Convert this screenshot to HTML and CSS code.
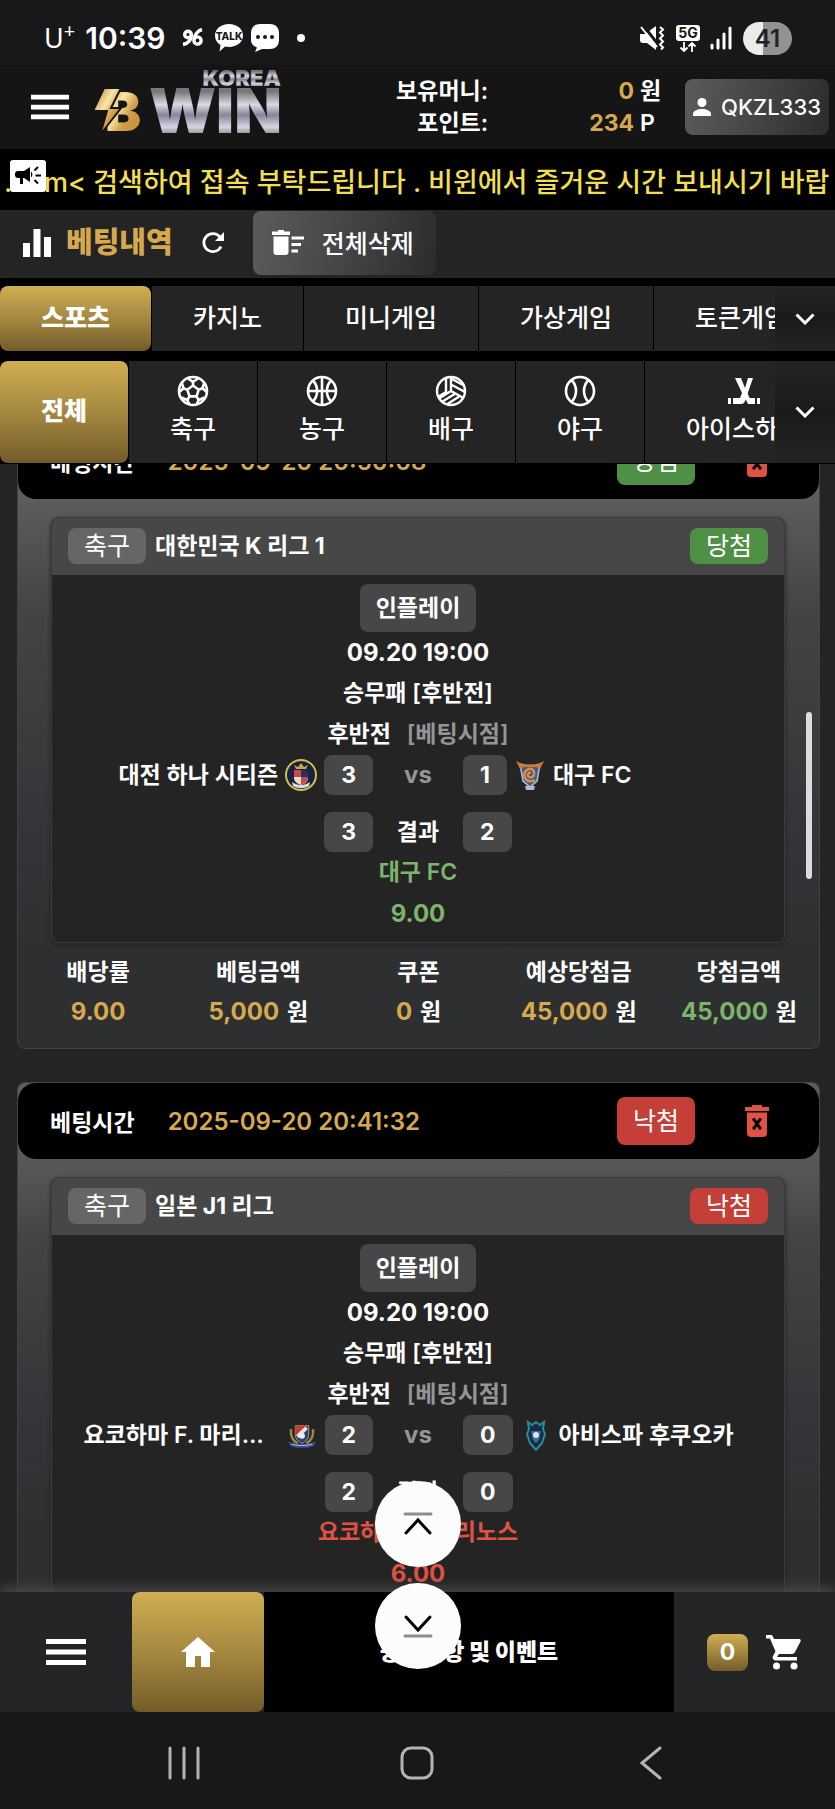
FILE: index.html
```html
<!DOCTYPE html>
<html lang="ko">
<head>
    <meta charset="UTF-8">
    <meta name="viewport" content="width=device-width, initial-scale=1.0">
    <title>베팅내역</title>
    <link rel="stylesheet" href="styles.css">
</head>
<body>
    <svg class="defs" width="0" height="0" aria-hidden="true">
        <symbol id="ic-menu" viewBox="0 0 40 26"><path d="M0 0h40v5H0zM0 10.500h40v5H0zM0 21h40v5H0z"/></symbol>
        <symbol id="ic-down" viewBox="0 0 20 12"><path d="M1.500 1.500 10 10l8.500-8.500" fill="none" stroke="currentColor" stroke-width="3"/></symbol>
        <symbol id="ic-trash-x" viewBox="0 0 24 32"><path d="M7 0h10v2h7v4H0V2h7z"/><path fill-rule="evenodd" d="M2 7.500h20V28a4 4 0 0 1-4 4H6a4 4 0 0 1-4-4zM7 14.600l3.400 4.200L7 23l2.200 2.200 2.800-3.600 2.800 3.600L17 23l-3.400-4.200L17 14.600l-2.200-2.200L12 16l-2.800-3.600z"/></symbol>
    </svg>

    <!-- 상태바 -->
    <div class="status-bar">
        <span class="carrier">U<sup>+</sup></span>
        <span class="clock">10:39</span>
        <svg class="st-96" width="22" height="20" viewBox="0 0 22 20" fill="none" stroke="#fff" stroke-width="3.400"><circle cx="6" cy="6.500" r="3.300"/><path d="M9.500 6C9.500 12 6 15.500 1 16.500"/><circle cx="15.500" cy="12.500" r="3.600"/><path d="M20 1.500c-4 1-7.500 5-8 10"/></svg>
        <svg class="st-talk" width="30" height="28" viewBox="0 0 30 28"><path fill="#fff" d="M15 0c8 0 14 5 14 11.500S23 23 15 23c-1.500 0-3-.2-4-.5L5.500 27.500 6.500 21C3 19 1 15.500 1 11.500 1 5 7 0 15 0z"/><text x="15" y="16" text-anchor="middle" class="talk-text">TALK</text></svg>
        <svg class="st-chat" width="28" height="28" viewBox="0 0 28 28"><path fill="#fff" d="M9 0h10c6 0 9 4 9 9v7c0 6-4 9-9 9h-8l-7 3 2-4.500C2 22 0 19.500 0 16V9c0-5 3-9 9-9z"/><g fill="#18181a"><circle cx="7" cy="13" r="2"/><circle cx="14" cy="13" r="2"/><circle cx="21" cy="13" r="2"/></g></svg>
        <span class="dot"></span>
        <span class="spacer"></span>
        <svg width="24" height="24" viewBox="0 0 24 24"><path fill="#fff" d="M0 8h5l11-8v24L7 17H3c-2 0-3-1-3-3z"/><path d="M3-1l17 22" stroke="#18181a" stroke-width="3"/><path d="M1 1l16 20" stroke="#fff" stroke-width="2"/><path d="M20 1l3 2.500-3 3 3 3-3 3 3 3-3 3 3 3-2 2" fill="none" stroke="#fff" stroke-width="2"/></svg>
        <svg class="st-5g" width="24" height="27" viewBox="0 0 24 27"><rect width="24" height="16" rx="3" fill="#fff"/><text x="12" y="13" text-anchor="middle" class="fiveg-text">5G</text><path d="M8 17v9M4.500 22.500 8 26l3.500-3.500M16 27v-9M12.500 21.500 16 18l3.500 3.500" fill="none" stroke="#fff" stroke-width="1.800"/></svg>
        <svg class="st-signal" width="22" height="24" viewBox="0 0 22 24" stroke="#fff" stroke-width="3" stroke-linecap="round"><path d="M2 19v3M8 14v8M14 8v14M20 2v20"/></svg>
        <span class="battery">41</span>
    </div>

    <!-- 헤더 -->
    <header class="header">
        <button class="icon-button" aria-label="메뉴"><svg width="38" height="26"><use href="#ic-menu"/></svg></button>
        <a class="logo" href="#" aria-label="KOREA WIN">
            <svg width="190" height="76" viewBox="0 0 190 76">
                <defs>
                    <linearGradient id="silver" x1="0" y1="0" x2="0" y2="1">
                        <stop offset=".25" stop-color="#77777c"/><stop offset=".42" stop-color="#d9d9e2"/>
                        <stop offset=".56" stop-color="#86869a"/><stop offset=".72" stop-color="#d5d5e2"/><stop offset=".85" stop-color="#77777c"/>
                    </linearGradient>
                    <linearGradient id="gold" x1="0" y1="0" x2="1" y2="1">
                        <stop offset="0" stop-color="#a8741f"/><stop offset=".4" stop-color="#fbe6a8"/>
                        <stop offset=".6" stop-color="#d0a04a"/><stop offset="1" stop-color="#c1862c"/>
                    </linearGradient>
                </defs>
                <text x="12" y="62" class="logo-b" fill="url(#gold)">B</text>
                <path d="M11 19h17L18 39h10L7 66l7-24H0z" fill="url(#gold)" stroke="#151515" stroke-width="2"/>
                <text x="56" y="64" class="logo-win" fill="url(#silver)">WIN</text>
                <text x="188" y="17" text-anchor="end" class="logo-korea" fill="url(#silver)">KOREA</text>
            </svg>
        </a>
        <dl class="balance">
            <dt>보유머니:</dt><dd class="gold">0</dd><dd>원</dd>
            <dt>포인트:</dt><dd class="gold">234</dd><dd>P</dd>
        </dl>
        <button class="gray-button user-button">
            <svg width="18" height="18" viewBox="0 0 18 18" fill="#fff"><circle cx="9" cy="4.500" r="4.500"/><path d="M0 18v-2c0-3.500 5-5 9-5s9 1.500 9 5v2z"/></svg>
            QKZL333
        </button>
    </header>

    <div class="notice">
        <span class="notice-icon">
            <svg width="26" height="20" viewBox="0 0 26 20"><path d="M3 5h6l6-4v15l-6-4H8v6H5v-6H3a3 3 0 0 1-3-3.500A3 3 0 0 1 3 5z"/><path d="M16 5.500a4 4 0 0 1 0 6z"/><path d="M19.500 4.500 23 1M20.500 9.500H26M19.500 14l3.500 3.500" stroke="#000" stroke-width="2"/></svg>
        </span>
        <p class="notice-text">.com&lt; 검색하여 접속 부탁드립니다 . 비윈에서 즐거운 시간 보내시기 바랍</p>
    </div>

    <div class="title-bar">
        <svg width="28" height="28" viewBox="0 0 28 28" fill="#fff"><path d="M0 14h7v14H0zM10.500 0h7v28h-7zM21 8h7v20h-7z"/></svg>
        <h1>베팅내역</h1>
        <button class="icon-button" aria-label="새로고침">
            <svg width="24" height="24" viewBox="0 0 24 24"><path d="M20 15.500A9 9 0 1 1 18.500 5.500L21 8" fill="none" stroke="#fff" stroke-width="2.800"/><path d="M23 1v9h-9z" fill="#fff"/></svg>
        </button>
        <button class="gray-button delete-all">
            <svg width="32" height="25" viewBox="0 0 32 25" fill="#fff"><path d="M6 0h6v1.500h6V5H0V1.500h6zM1.500 6.500h15V22a3 3 0 0 1-3 3h-9a3 3 0 0 1-3-3zM19.500 6.500H32v3H19.500zM19.500 13H29v3h-9.500zM19.500 19.500H26v3h-6.500z"/></svg>
            전체삭제
        </button>
    </div>

    <nav class="tabs">
        <div class="tab-strip">
            <button class="tab active">스포츠</button>
            <button class="tab">카지노</button>
            <button class="tab">미니게임</button>
            <button class="tab">가상게임</button>
            <button class="tab">토큰게임</button>
        </div>
        <button class="expand" aria-label="펼치기"><svg width="20" height="12"><use href="#ic-down"/></svg></button>
    </nav>

    <nav class="tabs sport-tabs">
        <div class="tab-strip">
            <button class="tab active">전체</button>
            <button class="tab">
                <svg width="32" height="32" viewBox="0 0 32 32" fill="none" stroke="#fff" stroke-width="2.600"><circle cx="16" cy="16" r="14"/><path d="M16 10.500l5.700 4.200-2.200 6.700h-7l-2.200-6.700zM16 10.500V7l-5-3.500M16 7l5-3.500M21.700 14.700l3.800-1.400 1.800-6M25.500 13.300l4.500 4M19.500 21.400l2.200 3.600-2 4.500M21.700 25l6-2.500M12.500 21.400 10.300 25l2 4.500M10.300 25l-6-2.500M10.300 14.700l-3.800-1.400-1.800-6M6.500 13.300l-4.500 4"/></svg>
                축구
            </button>
            <button class="tab">
                <svg width="32" height="32" viewBox="0 0 32 32" fill="none" stroke="#fff" stroke-width="2.600"><circle cx="16" cy="16" r="14"/><path d="M16 2v28M2 16h28M7 5.500c5.500 6 5.500 15 0 21M25 5.500c-5.500 6-5.500 15 0 21"/></svg>
                농구
            </button>
            <button class="tab">
                <svg width="32" height="32" viewBox="0 0 32 32" fill="none" stroke="#fff" stroke-width="2.400"><circle cx="16" cy="16" r="14"/><path d="M16 2v14l12.500 7M16 16 4 23.500M11 3v14L3 22M16 9.500l14 7.500M16 3.500 28 10M20.500 18.500 7.500 26.500M25 21 12.500 29"/></svg>
                배구
            </button>
            <button class="tab">
                <svg width="32" height="32" viewBox="0 0 32 32" fill="none" stroke="#fff" stroke-width="2.600"><circle cx="16" cy="16" r="14"/><path d="M7.500 5c6 6 6 16 0 22M24.500 5c-6 6-6 16 0 22"/></svg>
                야구
            </button>
            <button class="tab">
                <svg width="32" height="32" viewBox="0 0 32 32" fill="#fff"><path d="M7 3h6l4 10 3-10h5l-8 23c-.5 2-2 3-4 3H5v-6h7l2-5zM19.500 18l2 5H27v6h-7l-2.500-5zM0 23h3v6H0zM29 23h3v6h-3z"/></svg>
                아이스하키
            </button>
        </div>
        <button class="expand" aria-label="펼치기"><svg width="20" height="12"><use href="#ic-down"/></svg></button>
    </nav>

    <!-- 베팅 목록 -->
    <main class="bet-view">
        <div class="bet-list">
            <article class="bet">
                <div class="bet-head">
                    <span class="bet-label">베팅시간</span>
                    <time class="gold">2025-09-20 20:50:08</time>
                    <span class="badge tall win">당첨</span>
                    <button class="trash" aria-label="삭제"><svg width="24" height="32"><use href="#ic-trash-x"/></svg></button>
                </div>
                <div class="match">
                    <div class="match-head">
                        <span class="badge">축구</span>
                        <h2>대한민국 K 리그 1</h2>
                        <span class="badge win">당첨</span>
                    </div>
                    <div class="match-body">
                        <span class="inplay">인플레이</span>
                        <p class="num">09.20 19:00</p>
                        <p>승무패 [후반전]</p>
                        <p class="point">후반전 <span class="muted">[베팅시점]</span></p>
                        <div class="versus">
                            <div class="home">
                                <span class="team">대전 하나 시티즌</span>
                                <svg width="32" height="32" viewBox="0 0 32 32"><circle cx="16" cy="16" r="15" fill="#1b2047" stroke="#d3c04a" stroke-width="2"/><path d="M9 11h14v8c0 4-4 6-7 7-3-1-7-3-7-7z" fill="#e9dcc0"/><path d="M9 11h7v7H9zM16 18h7c0 4-3 6-7 8z" fill="#c9494d"/><path d="M16 11h7v7h-7z" fill="#27305f"/><path d="M11 10 9 6l4 2 3-4 3 4 4-2-2 4z" fill="#c9a93f"/><path d="M7 23c6 4 12 4 18 0l-1 4c-5 3-11 3-16 0z" fill="#d9d9dc"/></svg>
                                <span class="score">3</span>
                            </div>
                            <span class="muted num">vs</span>
                            <div class="away">
                                <span class="score">1</span>
                                <svg width="32" height="32" viewBox="-2 0 32 32"><path d="M4 5c6 2 14 2 20 0l-3 17-7 6-7-6z" fill="#2f5f9e" stroke="#a9c3dd" stroke-width="1.500"/><path d="M0 2l8 4c4-1 8-1 12 0l8-4-4 8-4-2H8l-4 2z" fill="#d8752c"/><path d="M15 14c-2-1-4 1-3 3s5 2 6-1-1-7-5-6-6 5-4 9 7 4 10 2" fill="none" stroke="#ec8a35" stroke-width="2.500"/><path d="M9 27h10l-1 4h-8z" fill="#b9bcc2"/></svg>
                                <span class="team">대구 FC</span>
                            </div>
                        </div>
                        <div class="versus result">
                            <div class="home"><span class="score">3</span></div>
                            <span>결과</span>
                            <div class="away"><span class="score">2</span></div>
                        </div>
                        <p class="green">대구 FC</p>
                        <p class="green num">9.00</p>
                    </div>
                </div>
                <table class="totals">
                    <thead>
                        <tr><th>배당률</th><th>베팅금액</th><th>쿠폰</th><th>예상당첨금</th><th>당첨금액</th></tr>
                    </thead>
                    <tbody>
                        <tr>
                            <td><span class="gold num">9.00</span></td>
                            <td><span class="gold num">5,000</span> <span class="unit">원</span></td>
                            <td><span class="gold num">0</span> <span class="unit">원</span></td>
                            <td><span class="gold num">45,000</span> <span class="unit">원</span></td>
                            <td><span class="green num">45,000</span> <span class="unit">원</span></td>
                        </tr>
                    </tbody>
                </table>
            </article>

            <article class="bet">
                <div class="bet-head">
                    <span class="bet-label">베팅시간</span>
                    <time class="gold">2025-09-20 20:41:32</time>
                    <span class="badge tall lose">낙첨</span>
                    <button class="trash" aria-label="삭제"><svg width="24" height="32"><use href="#ic-trash-x"/></svg></button>
                </div>
                <div class="match">
                    <div class="match-head">
                        <span class="badge">축구</span>
                        <h2>일본 J1 리그</h2>
                        <span class="badge lose">낙첨</span>
                    </div>
                    <div class="match-body">
                        <span class="inplay">인플레이</span>
                        <p class="num">09.20 19:00</p>
                        <p>승무패 [후반전]</p>
                        <p class="point">후반전 <span class="muted">[베팅시점]</span></p>
                        <div class="versus">
                            <div class="home">
                                <span class="team">요코하마 F. 마리노스</span>
                                <svg width="32" height="32" viewBox="-3 -3 38 38"><path d="M3 9c-1 8 2 14 8 17M29 9c1 8-2 14-8 17" fill="none" stroke="#9b8a3c" stroke-width="3"/><path d="M8 5h16v10c0 6-4 9-8 11-4-2-8-5-8-11z" fill="#28407f" stroke="#c9b25e"/><path d="M8 5h16L8 16z" fill="#c23b34"/><path d="M20 6 9 16l3 4 11-11z" fill="#e6e6e6"/><circle cx="16" cy="17" r="3.500" fill="#eee"/><path d="M0 24c10 4 22 4 32 0l-2 5c-9 3-19 3-28 0z" fill="#3c50a5"/><path d="M4 27c8 2 16 2 24 0" fill="none" stroke="#c8cde0"/></svg>
                                <span class="score">2</span>
                            </div>
                            <span class="muted num">vs</span>
                            <div class="away">
                                <span class="score">0</span>
                                <svg width="32" height="32" viewBox="0 0 32 32"><path d="M8 3l4 3 4-3 4 3 4-3-1 7 2 5-3 9-6 7-6-7-3-9 2-5z" fill="#182b45" stroke="#2a8d9a" stroke-width="2"/><path d="M11 12h10l-2 9-3 3-3-3z" fill="#3a6ea4"/><circle cx="16" cy="16" r="3" fill="#d5e6f2"/></svg>
                                <span class="team">아비스파 후쿠오카</span>
                            </div>
                        </div>
                        <div class="versus result">
                            <div class="home"><span class="score">2</span></div>
                            <span>결과</span>
                            <div class="away"><span class="score">0</span></div>
                        </div>
                        <p class="red">요코하마 F. 마리노스</p>
                        <p class="red num">6.00</p>
                    </div>
                </div>
            </article>
        </div>
        <span class="scroll-thumb"></span>
    </main>

    <nav class="bottom-nav">
        <button class="nav-side" aria-label="메뉴"><svg width="40" height="26"><use href="#ic-menu"/></svg></button>
        <a class="nav-home" href="#" aria-label="홈"><svg width="34" height="30" viewBox="0 0 34 30" fill="#fff"><path d="M17 0l17 15h-5v15h-9V19h-6v11H5V15H0z"/></svg></a>
        <a class="nav-notice" href="#">공지사항 및 이벤트</a>
        <button class="nav-cart" aria-label="카트">
            <span class="cart-count">0</span>
            <svg width="36" height="36" viewBox="0 0 36 36" fill="#fff"><path d="M0 1h6l2 4h25c2 0 2 1.500 1.500 2.500L29 18c-1 1.500-2 2-3 2H13l-2 3h20v3.500H10c-3 0-4-2.500-3-4.500l2.500-4.500L4 4.500H0z"/><circle cx="10.500" cy="32" r="3.500"/><circle cx="28" cy="32" r="3.500"/></svg>
        </button>
        <div class="jump">
            <button aria-label="맨 위로"><svg width="30" height="24" viewBox="0 0 30 24" fill="none" stroke-linecap="round" stroke-width="3"><path d="M2 2h26" stroke="#8c8c8c"/><path d="M3 21 15 8l12 13" stroke="#000"/></svg></button>
            <button aria-label="맨 아래로"><svg width="30" height="24" viewBox="0 0 30 24" fill="none" stroke-linecap="round" stroke-width="3"><path d="M3 3l12 13L27 3" stroke="#000"/><path d="M2 22h26" stroke="#8c8c8c"/></svg></button>
        </div>
    </nav>

    <div class="system-nav">
        <button aria-label="최근 앱"><svg width="32" height="34" viewBox="0 0 32 34"><path d="M2 2v30M16 2v30M30 2v30"/></svg></button>
        <button aria-label="홈 화면"><svg width="34" height="34" viewBox="0 0 34 34"><rect x="2" y="2" width="30" height="30" rx="9"/></svg></button>
        <button aria-label="뒤로"><svg width="22" height="34" viewBox="0 0 22 34"><path d="M20 2 2 17l18 15"/></svg></button>
    </div>
</body>
</html>
```
FILE: styles.css
```css
* {
    box-sizing: border-box;
    margin: 0;
    padding: 0;
}
body {
    display: flex;
    flex-direction: column;
    height: 100vh;
    overflow: hidden;
    background: #000;
    color: #fff;
    font-family: Inter, "Noto Sans CJK KR", sans-serif;
    font-size: 23px;
    font-weight: 600;
}
button {
    border: none;
    background: none;
    color: inherit;
    font: inherit;
    cursor: pointer;
}
a {
    color: inherit;
    text-decoration: none;
}
svg {
    flex: none;
    display: block;
    overflow: visible;
}
svg:not([fill]) {
    fill: currentColor;
}
.defs {
    position: absolute;
}
.gold { color: #d6a94f; }
.green { color: #7db46c; }
.red { color: #e05243; }
.muted { color: #959595; }
.num {
    font-size: 24px;
    font-weight: 700;
}
.spacer { flex: 1; }

/* status bar */
.status-bar {
    flex: none;
    display: flex;
    align-items: center;
    height: 65px;
    padding: 11px 43px 0 44px;
    background: #18181a;
}
.carrier {
    margin-right: 10px;
    font-family: "Noto Sans", sans-serif;
    font-size: 27px;
    font-weight: 400;
    line-height: 32px;
}
.carrier sup {
    font-size: 20px;
    line-height: 0;
}
.clock {
    font-size: 30px;
}
.st-96 { margin-left: 16px; }
.st-talk { margin-left: 10px; }
.st-chat { margin-left: 7px; }
.st-5g { margin-left: 12px; }
.st-signal { margin-left: 10px; }
.talk-text {
    font-size: 10px;
    font-weight: 800;
    fill: #18181a;
}
.fiveg-text {
    font-size: 14px;
    font-weight: 700;
    fill: #18181a;
}
.dot {
    width: 8px;
    height: 8px;
    margin-left: 18px;
    border-radius: 50%;
    background: #fff;
}
.battery {
    width: 49px;
    margin-left: 11px;
    border-radius: 17px;
    background: linear-gradient(90deg, #ececec 40%, #929292 40%);
    color: #222;
    font-size: 24px;
    line-height: 33px;
    text-align: center;
}

/* header */
.header {
    flex: none;
    display: flex;
    align-items: center;
    height: 84px;
    padding: 0 6px 0 31px;
    background: #151515;
}
.logo {
    margin-left: 24px;
}
.logo-b {
    font-size: 54px;
    font-weight: 900;
}
.logo-win {
    font-size: 62px;
    font-weight: 900;
}
.logo-korea {
    font-size: 22px;
    font-weight: 900;
}
.balance {
    display: grid;
    grid-template-columns: 1fr 146px 51px;
    flex: 1;
    line-height: 32px;
    text-align: right;
}
.balance .gold {
    font-weight: 700;
}
.balance dd:nth-of-type(even) {
    padding-left: 6px;
    text-align: left;
}
.gray-button {
    display: flex;
    align-items: center;
    border-radius: 8px;
    background: linear-gradient(100deg, #5b5b5b, #454545 50%, #2b2c2e);
}
.user-button {
    gap: 10px;
    height: 56px;
    padding: 0 8px;
    font-size: 22px;
    font-weight: 500;
}

/* notice */
.notice {
    flex: none;
    position: relative;
    height: 61px;
    padding: 14px 4px 0;
    overflow: hidden;
    background: #000;
}
.notice-icon {
    position: absolute;
    left: 10px;
    top: 11px;
    display: grid;
    place-items: center;
    width: 36px;
    height: 32px;
    border-radius: 3px;
    background: #fff;
    color: #000;
}
.notice-text {
    color: #f2df4e;
    font-size: 27px;
    font-weight: 500;
    line-height: 40px;
    white-space: nowrap;
}

/* title bar */
.title-bar {
    flex: none;
    display: flex;
    align-items: center;
    height: 68px;
    padding: 0 23px 2px;
    background: #242424;
}
.title-bar h1 {
    margin: 0 28px 0 15px;
    color: #d6a94f;
    font-size: 29px;
    font-weight: 900;
    line-height: 40px;
}
.delete-all {
    gap: 18px;
    height: 64px;
    margin-left: 28px;
    padding: 0 22px 2px 19px;
    font-size: 25px;
    font-weight: 500;
}

/* tabs */
.tabs {
    flex: none;
    display: flex;
    height: 65px;
    margin-top: 8px;
    background: #242424;
}
.tab-strip {
    flex: 1;
    display: flex;
    gap: 1px;
    min-width: 0;
    overflow: hidden;
    background: #000;
}
.tab {
    flex: none;
    display: flex;
    flex-direction: column;
    align-items: center;
    justify-content: center;
    padding: 0 41px 2px;
    background: #242424;
    font-size: 25px;
    font-weight: 500;
    line-height: 36px;
    white-space: nowrap;
}
.tab.active {
    border-radius: 8px;
    background: linear-gradient(#d0ae53, #a58840 50%, #745c29);
    font-weight: 900;
}
.expand {
    display: grid;
    place-items: center;
    width: 60px;
    background: linear-gradient(#242424, #1a1a1a 50%, #242424);
}
.sport-tabs {
    height: 102px;
    margin: 10px 0 1px;
}
.sport-tabs .tab {
    gap: 4px;
}

/* bet list */
.bet-view {
    flex: 1;
    position: relative;
    min-height: 0;
    overflow: hidden;
    background: #242424;
}
.bet-list {
    display: flex;
    flex-direction: column;
    gap: 33px;
    margin-top: -42px;
    padding: 0 15px 0 17px;
}
.bet {
    border: 1px solid #434343;
    border-radius: 8px;
    background: linear-gradient(#5c5c5c 12%, #444 30%, #36373a 60%, #2d2f31 85%);
}
.bet-head {
    display: flex;
    align-items: center;
    height: 76px;
    padding: 0 50px 0 32px;
    border-radius: 18px;
    background: #000;
}
.bet-head time {
    flex: 1;
    margin-left: 33px;
    font-size: 24px;
}
.badge {
    padding: 0 16px;
    border-radius: 8px;
    background: #666;
    font-size: 25px;
    font-weight: 400;
    line-height: 36px;
}
.badge.tall { line-height: 48px; }
.badge.win { background: #4f8f46; }
.badge.lose { background: #c33f37; }
.trash {
    margin-left: 50px;
    color: #e05243;
}
.match {
    margin: 18px 34px 0 33px;
    border: 1px solid #3c3c3c;
    border-radius: 8px;
    background: #242424;
    box-shadow: 0 2px 4px #222;
    overflow: hidden;
}
.match-head {
    display: flex;
    align-items: center;
    gap: 9px;
    height: 57px;
    padding: 0 16px 2px;
    background: #474747;
}
.match-head h2 {
    flex: 1;
    font-size: 23px;
    font-weight: 700;
    line-height: 32px;
}
.match-body {
    padding: 9px 0 8px;
    line-height: 40px;
    text-align: center;
}
.match-body p {
    line-height: 41px;
}
.inplay {
    display: inline-block;
    padding: 0 16px;
    border-radius: 8px;
    background: #474747;
    line-height: 48px;
    vertical-align: top;
}
.point .muted {
    margin-left: 10px;
}
.versus {
    display: grid;
    grid-template-columns: 1fr 90px 1fr;
}
.versus.result {
    margin-top: 17px;
}
.home, .away {
    display: flex;
    align-items: center;
    gap: 7px;
    min-width: 0;
}
.home {
    justify-content: flex-end;
}
.team {
    max-width: 195px;
    overflow: hidden;
    text-overflow: ellipsis;
    white-space: nowrap;
}
.score {
    padding: 0 17px;
    border-radius: 8px;
    background: #474747;
    font-weight: 700;
}
.totals {
    width: 100%;
    margin: 9px 0 16px;
    border-collapse: collapse;
    table-layout: fixed;
    line-height: 40px;
    text-align: center;
    white-space: nowrap;
}
.totals th {
    font-weight: 600;
}
.unit {
    margin-left: 2px;
}
.scroll-thumb {
    position: absolute;
    top: 22%;
    right: 23px;
    width: 6px;
    height: 167px;
    border-radius: 3px;
    background: #dcdcde;
}

/* bottom nav */
.bottom-nav {
    flex: none;
    position: relative;
    display: flex;
    height: 120px;
    background: #232426;
    box-shadow: 0 -4px 12px #4a4a4a;
}
.bottom-nav > a, .bottom-nav > button {
    display: flex;
    align-items: center;
    justify-content: center;
}
.nav-side, .nav-home {
    width: 132px;
}
.nav-home {
    border-radius: 8px;
    background: linear-gradient(#d0ae53, #a58840 50%, #745c29);
}
.bottom-nav > .nav-notice {
    flex: 1;
    padding-bottom: 4px;
    background: #000;
    font-weight: 900;
}
.nav-cart {
    gap: 18px;
    width: 161px;
}
.cart-count {
    width: 41px;
    border-radius: 8px;
    background: linear-gradient(#d0ae53, #745c29);
    font-weight: 700;
    line-height: 37px;
}
.jump {
    position: absolute;
    left: 50%;
    bottom: 43px;
    display: flex;
    flex-direction: column;
    gap: 16px;
    transform: translateX(-50%);
}
.jump button {
    display: grid;
    place-items: center;
    width: 86px;
    height: 86px;
    border-radius: 50%;
    background: #fcfcfc;
}

.system-nav {
    flex: none;
    position: relative;
    display: flex;
    height: 97px;
    padding: 4px 8% 0;
    background: #18181a;
}
.system-nav button {
    flex: 1;
    display: grid;
    place-items: center;
}
.system-nav svg {
    fill: none;
    stroke: #b4b4b4;
    stroke-width: 3;
    stroke-linecap: round;
}
```
